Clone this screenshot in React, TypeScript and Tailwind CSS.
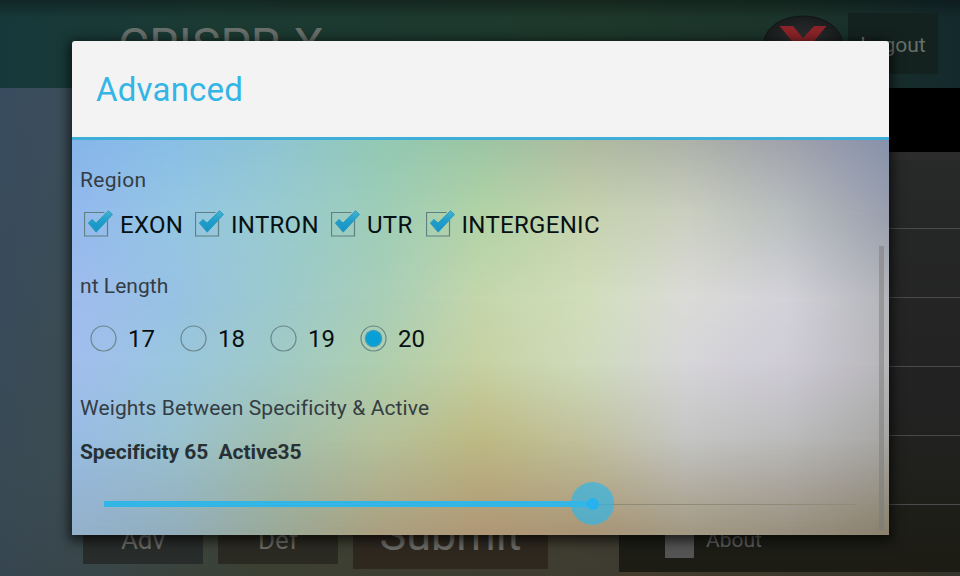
import React from "react";

const regions = [
  { name: "EXON", width: "w-[111px]" },
  { name: "INTRON", width: "w-[136px]" },
  { name: "UTR", width: "w-[94.5px]" },
  { name: "INTERGENIC", width: "w-[200px]" },
];
const lengths = [17, 18, 19, 20];
const menuRows = [0, 1, 2, 3, 4];

// Horizontal colour bands, each faded in over the one above it.
const bands = [
  "bg-[linear-gradient(90deg,#86b6ea,#8abfe6,#8fc5d3,#93c9b4,#9cc6a4,#aebb9f,#aeb3a9,#a1a2ac,#8792ac)]",
  "bg-[linear-gradient(90deg,#94b9ee,#94c6e3,#98cbd0,#9ecdb8,#b2d3a6,#c6d2ae,#cbcfc0,#b9bebf,#9a9fae)] [mask-image:linear-gradient(180deg,transparent_0px,black_75px)]",
  "bg-[linear-gradient(90deg,#9fbcee,#97c2e3,#9cc9cc,#a8ceb8,#c4d6ab,#d0deba,#dbdbd8,#d3d2d9,#b3b5ba)] [mask-image:linear-gradient(180deg,transparent_75px,black_160px)]",
  "bg-[linear-gradient(90deg,#a1beee,#9ac6de,#a0cac6,#aeceae,#c6d1a2,#cedabb,#d6d5d8,#cecbd6,#b6b5b8)] [mask-image:linear-gradient(180deg,transparent_160px,black_225px)]",
  "bg-[linear-gradient(90deg,#98bce4,#9ac2d0,#a2bfae,#b5c19a,#bdb983,#c0c09c,#c4c5c3,#bbbbbb,#a6a5a3)] [mask-image:linear-gradient(180deg,transparent_225px,black_300px)]",
  "bg-[linear-gradient(90deg,#93b1cc,#92aebc,#9aaa98,#aaa080,#b09876,#aa9676,#a39a84,#999080,#8a826e)] [mask-image:linear-gradient(180deg,transparent_300px,black_390px)]",
];

function CheckBox({ name, width }: { name: string; width: string }) {
  return (
    <label className={`flex h-8 shrink-0 items-center ${width}`}>
      <svg width="30" height="30" viewBox="0 0 30 30" className="mb-[2px] mr-[6px] shrink-0">
        <defs>
          <linearGradient id="tick" x1="0" y1="0" x2="0" y2="1">
            <stop offset="0" stopColor="#48b3d2" />
            <stop offset="0.45" stopColor="#1f9fca" />
            <stop offset="1" stopColor="#1692c6" />
          </linearGradient>
        </defs>
        <path d="M20.5 4.5H0.5V28H23.5V12" fill="none" stroke="#5f7f82" strokeWidth="1.2" />
        <path
          d="M4.3 15L8 11.4L12 15L24.5 2.8L28.5 6.5L12.2 24.2Z"
          fill="url(#tick)"
          stroke="#2d9cbd"
          strokeWidth="1"
          strokeLinejoin="round"
        />
      </svg>
      <span className="pt-[2px] tracking-[0.3px]">{name}</span>
    </label>
  );
}

function Radio({ value, selected }: { value: number; selected: boolean }) {
  return (
    <label className="flex w-[90px] items-center">
      <svg width="28" height="28" viewBox="0 0 28 28" className="mr-[10px] shrink-0">
        <circle cx="13.5" cy="13.5" r="12.5" fill="none" stroke="#68868a" strokeWidth="1.2" />
        {selected && (
          <>
            <circle cx="13.5" cy="13.5" r="8.8" fill="#3f9fbd" />
            <circle cx="13.5" cy="13.5" r="7.4" fill="#079fd5" />
          </>
        )}
      </svg>
      <span>{value}</span>
    </label>
  );
}

function Backdrop() {
  return (
    <div className="flex h-full flex-col bg-[linear-gradient(90deg,#384c60_0px,#3c4e58_80px,#41432e_260px,#473d2c_560px,#36352b_960px)]">
      <header className="flex h-[88px] shrink-0 items-start bg-[linear-gradient(180deg,rgba(0,0,0,0.32),rgba(0,0,0,0)_18px),linear-gradient(90deg,#17383a,#1b3a32_22%,#1e382b_60%,#1b332a_83%,#14292c)] text-[#667069]">
        <h1 className="ml-[118px] mt-[18px] w-[645px] text-[48px] leading-[56px] text-[#69706c]">CRISPR-X</h1>
        <svg width="80" height="60" viewBox="0 0 80 60" className="mt-[15px]">
          <defs>
            <radialGradient id="disc">
              <stop offset="0" stopColor="#303234" />
              <stop offset="1" stopColor="#191c1d" />
            </radialGradient>
          </defs>
          <ellipse cx="40" cy="28" rx="39" ry="27" fill="url(#disc)" stroke="#101415" strokeWidth="1" />
          <path d="M16.5 11H30L40 23L51 11H63.5L47 31H33Z" fill="#8b2428" />
        </svg>
        <div className="ml-[5px] mt-[13px] flex h-[61px] w-[90px] items-center justify-center bg-[#14221f] pt-[4px] text-[21px]">
          Logout
        </div>
      </header>
      <div className="flex min-h-0 flex-1">
        <main className="flex w-[619px] items-end bg-[linear-gradient(180deg,rgba(60,75,70,0),rgba(60,70,65,0.35)_80%,rgba(50,58,54,0.4))] pl-[83px] text-[#6d6c67]">
          <div className="mb-3 mr-[15px] flex h-12 w-[120px] items-center justify-center bg-[#282c2a] pt-px text-[26px]">
            Adv
          </div>
          <div className="mb-3 mr-[15px] flex h-12 w-[120px] items-center justify-center bg-[#2b2a22] pt-px text-[26px]">
            Def
          </div>
          <div className="mb-[7px] flex h-[68px] w-[195px] items-center justify-center bg-[#2e281f] text-[45px]">
            Submit
          </div>
        </main>
        <aside className="mb-1 flex flex-1 flex-col bg-[linear-gradient(180deg,#292a2a,#222222_65%,#1c1c14)]">
          <div className="h-16 bg-black" />
          <div className="h-2 bg-[#2c2c2c]" />
          {menuRows.map((row) => (
            <div key={row} className="h-[69px] border-b border-[#4a4a4a]" />
          ))}
          <div className="flex h-[67px] items-center pl-[46px] text-[21px] text-[#606060]">
            <span className="mr-3 mt-[9px] h-[29px] w-[29px] bg-[#555455]" />
            <span className="pt-[5px]">About</span>
          </div>
        </aside>
      </div>
    </div>
  );
}

export default function App() {
  return (
    <div className="relative h-[576px] w-[960px] overflow-hidden font-['Roboto','Liberation_Sans',sans-serif]">
      <Backdrop />
      <section className="absolute left-[72px] top-[41px] flex h-[494px] w-[817px] flex-col overflow-hidden rounded-t-[3px] shadow-[0_3px_12px_3px_rgba(0,0,0,0.65)]">
        <header className="flex h-[99px] shrink-0 items-center border-b-[3px] border-[#3eaed8] bg-[#f3f3f3] pl-6 pt-[2px] text-[33px] tracking-[0.2px] text-[#33b5e5]">
          Advanced
        </header>
        <div className="relative isolate flex flex-1 flex-col">
          {bands.map((band) => (
            <div key={band} className={`absolute inset-0 -z-10 ${band}`} />
          ))}
          <h2 className="mt-[28px] pl-2 text-[21px] leading-6 tracking-[0.3px] text-[#343d43]">Region</h2>
          <div className="mt-[15px] flex h-[34px] items-center pl-3 text-[24px] text-[#071012]">
            {regions.map((r) => (
              <CheckBox key={r.name} name={r.name} width={r.width} />
            ))}
          </div>
          <h2 className="mt-[33px] pl-2 text-[21px] leading-6 tracking-[0.05px] text-[#343d43]">nt Length</h2>
          <div className="mt-[24px] flex h-[34px] items-center pl-[18px] text-[24px] text-[#071012]">
            {lengths.map((n) => (
              <Radio key={n} value={n} selected={n === 20} />
            ))}
          </div>
          <h2 className="mt-[40px] pl-2 text-[21px] leading-6 tracking-[0.12px] text-[#343d43]">
            Weights Between Specificity &amp; Active
          </h2>
          <p className="mt-[20px] whitespace-pre pl-2 text-[21px] font-bold leading-6 tracking-[-0.07px] text-[#273135]">
            {"Specificity 65  Active35"}
          </p>
          <div className="relative ml-8 mt-[18px] flex h-[44px] w-[752px] items-center">
            <div className="h-[6px] w-[489px] bg-[#33b5e5]" />
            <div className="h-px flex-1 bg-[#8f8b77]" />
            <div className="absolute left-[467px] top-0 flex h-[43px] w-[43px] items-center justify-center rounded-full bg-[#33b5e5]/70">
              <div className="h-3 w-3 rounded-full bg-[#27b2ee]" />
            </div>
          </div>
          <div className="absolute bottom-[5px] right-[5px] top-[106px] w-[5px] bg-[#777777]/50" />
        </div>
      </section>
    </div>
  );
}
